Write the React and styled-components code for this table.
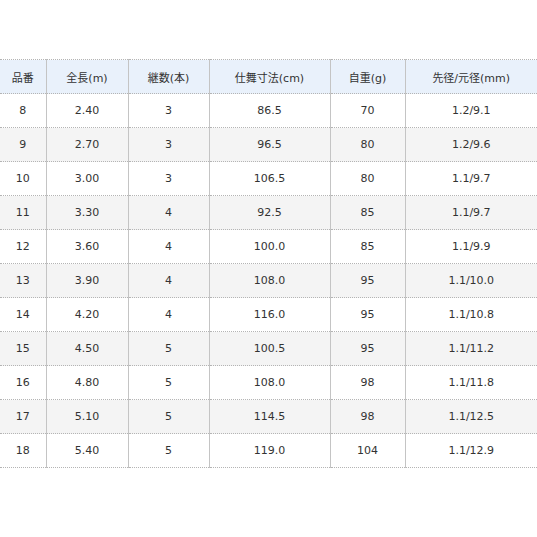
import styled, { createGlobalStyle } from "styled-components";

const GlobalStyle = createGlobalStyle`
  html, body {
    margin: 0;
    padding: 0;
    background: #ffffff;
  }
`;

const Page = styled.div`
  width: 537px;
  height: 537px;
  padding-top: 59px;
  box-sizing: border-box;
  background: #ffffff;
`;

const Table = styled.table`
  width: 537px;
  border-collapse: collapse;
  table-layout: fixed;
  font-family: "DejaVu Sans", "Noto Sans CJK JP", sans-serif;
  font-size: 11px;
  color: #333333;
`;

const HeadCell = styled.th`
  height: 33px;
  padding: 0;
  font-weight: normal;
  text-align: center;
  background: #e9f1fb;
  border-top: 1px dotted #b4b4b4;
  border-bottom: 1px dotted #b4b4b4;
  border-left: 1px solid #c4c4c4;
  &:first-child {
    border-left: none;
  }
`;

const Row = styled.tr`
  background: ${(props) => (props.shaded ? "#f4f4f4" : "#ffffff")};
`;

const Cell = styled.td`
  height: 33px;
  padding: 0;
  text-align: center;
  border-bottom: 1px dotted #b4b4b4;
  border-left: 1px solid #c4c4c4;
  &:first-child {
    border-left: none;
  }
`;

const widths = [46, 82, 81, 121, 75, 132];
const headers = ["品番", "全長(m)", "継数(本)", "仕舞寸法(cm)", "自重(g)", "先径/元径(mm)"];

const rows = [
  ["8", "2.40", "3", "86.5", "70", "1.2/9.1"],
  ["9", "2.70", "3", "96.5", "80", "1.2/9.6"],
  ["10", "3.00", "3", "106.5", "80", "1.1/9.7"],
  ["11", "3.30", "4", "92.5", "85", "1.1/9.7"],
  ["12", "3.60", "4", "100.0", "85", "1.1/9.9"],
  ["13", "3.90", "4", "108.0", "95", "1.1/10.0"],
  ["14", "4.20", "4", "116.0", "95", "1.1/10.8"],
  ["15", "4.50", "5", "100.5", "95", "1.1/11.2"],
  ["16", "4.80", "5", "108.0", "98", "1.1/11.8"],
  ["17", "5.10", "5", "114.5", "98", "1.1/12.5"],
  ["18", "5.40", "5", "119.0", "104", "1.1/12.9"],
];

export default function App() {
  return (
    <Page>
      <GlobalStyle />
      <Table>
        <colgroup>
          {widths.map((w, i) => (
            <col key={i} style={{ width: w }} />
          ))}
        </colgroup>
        <thead>
          <tr>
            {headers.map((h) => (
              <HeadCell key={h}>{h}</HeadCell>
            ))}
          </tr>
        </thead>
        <tbody>
          {rows.map((r, i) => (
            <Row key={r[0]} shaded={i % 2 === 1}>
              {r.map((c, j) => (
                <Cell key={j}>{c}</Cell>
              ))}
            </Row>
          ))}
        </tbody>
      </Table>
    </Page>
  );
}
